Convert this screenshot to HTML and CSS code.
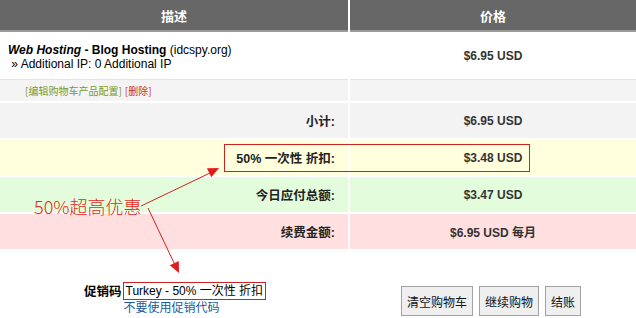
FILE: index.html
```html
<!DOCTYPE html>
<html lang="zh">
<head>
<meta charset="utf-8">
<link rel="stylesheet" href="styles.css">
</head>
<body>
<div class="page">
  <div class="row head">
    <div class="cell">描述</div>
    <div class="cell">价格</div>
  </div>
  <div class="row item">
    <div class="cell desc">
      <div><b><i>Web Hosting</i> - Blog Hosting</b> (idcspy.org)</div>
      <div class="addon">&nbsp;» Additional IP: 0 Additional IP</div>
    </div>
    <div class="cell price">$6.95 USD</div>
  </div>
  <div class="row links">
    <div class="cell"><a class="edit">[编辑购物车产品配置]</a> <a class="del">[删除]</a></div>
    <div class="cell"></div>
  </div>
  <div class="row sum sub">
    <div class="cell label">小计:</div>
    <div class="cell price">$6.95 USD</div>
  </div>
  <div class="row sum disc">
    <div class="cell label">50% 一次性 折扣:</div>
    <div class="cell price">$3.48 USD</div>
  </div>
  <div class="row sum total">
    <div class="cell label">今日应付总额:</div>
    <div class="cell price">$3.47 USD</div>
  </div>
  <div class="row sum recur">
    <div class="cell label">续费金额:</div>
    <div class="cell price">$6.95 USD 每月</div>
  </div>
  <div class="footer">
    <div class="promo">
      <span class="plabel">促销码</span>
      <span class="pcode">Turkey - 50% 一次性 折扣</span>
      <a class="premove">不要使用促销代码</a>
    </div>
    <div class="buttons">
      <button class="btn">清空购物车</button>
      <button class="btn">继续购物</button>
      <button class="btn">结账</button>
    </div>
  </div>

  <div class="hl"></div>
  <div class="note">50%超高优惠</div>
  <svg class="arrows" width="636" height="318" viewBox="0 0 636 318">
    <line x1="141" y1="206" x2="210" y2="173" stroke="#d42222" stroke-width="1"/>
    <polygon points="219,168 211.3,177.3 206.9,168.3" fill="#e01e1e"/>
    <line x1="148" y1="208" x2="175" y2="265" stroke="#d42222" stroke-width="1"/>
    <polygon points="179,273 178.8,260.9 169.8,265.2" fill="#e01e1e"/>
  </svg>
</div>
</body>
</html>
```

FILE: styles.css
```css
html, body {
  margin: 0;
  padding: 0;
  background: #ffffff;
}

body {
  font-family: "Liberation Sans", "Noto Sans CJK SC", sans-serif;
  font-size: 12px;
  color: #111;
}

.page {
  position: relative;
  width: 636px;
  height: 318px;
  overflow: hidden;
}

.row {
  display: grid;
  grid-template-columns: 348px 286px;
  column-gap: 2px;
}

.head .cell {
  height: 30px;
  background: #676767;
  border-bottom: 2px solid #9a9a9a;
  color: #fff;
  font-weight: bold;
  font-size: 13px;
  display: flex;
  align-items: center;
  justify-content: center;
  font-family: "Noto Sans CJK SC", sans-serif;
}

.item .cell {
  background: #fff;
  border-bottom: 1px solid #e4e4e4;
  box-sizing: border-box;
  height: 48px;
}

.desc {
  display: flex;
  flex-direction: column;
  justify-content: center;
  padding: 3px 0 0 8px;
  line-height: 14px;
  color: #000;
}

.price {
  display: flex;
  align-items: center;
  justify-content: center;
  font-weight: bold;
  color: #333;
}

.links .cell {
  height: 21px;
  background: #f4f4f4;
  display: flex;
  align-items: center;
  padding-left: 25px;
  font-size: 10px;
  font-family: "Noto Sans CJK SC", sans-serif;
}

.links .cell + .cell {
  padding-left: 0;
}

.edit {
  color: #7a9a2a;
  margin-right: 3px;
}

.del {
  color: #cc3333;
}

.sum {
  margin-top: 2px;
}

.sum .cell {
  height: 35px;
}

.label {
  display: flex;
  align-items: center;
  justify-content: flex-end;
  padding-right: 13px;
  font-weight: bold;
  font-size: 12.5px;
  color: #222;
}

.sub .cell { background: #f3f3f3; }
.disc .cell { background: #ffffdd; }
.total .cell { background: #e2fcdc; }
.recur .cell { background: #ffdfdf; }

.sum .price {
  font-size: 12px;
}

.footer {
  display: grid;
  grid-template-columns: 401px auto;
  padding-top: 32px;
}

.promo {
  justify-self: start;
  margin-left: 84px;
  display: grid;
  grid-template-columns: auto auto;
  align-items: center;
  font-size: 12px;
}

.plabel {
  font-weight: bold;
  font-size: 12.5px;
  color: #000;
}

.pcode {
  border: 1px solid #cc2222;
  padding: 0 2px;
  line-height: 16px;
  color: #000;
  margin-left: 1px;
}

.premove {
  grid-column: 2;
  color: #1a5a9c;
  padding-left: 2px;
  line-height: 16px;
}

.buttons {
  display: flex;
  gap: 6px;
  margin-top: 5px;
  align-items: flex-start;
}

.btn {
  height: 30px;
  padding: 0 5px;
  border: 1px solid #a3a3a3;
  background: #efefef;
  font-family: "Noto Sans CJK SC", sans-serif;
  font-size: 12px;
  color: #111;
  border-radius: 0;
}

.hl {
  position: absolute;
  left: 224px;
  top: 144px;
  width: 306px;
  height: 28px;
  box-sizing: border-box;
  border: 1px solid #cc2222;
}

.note {
  position: absolute;
  left: 34px;
  top: 195px;
  font-family: "Noto Sans CJK SC", sans-serif;
  font-weight: 300;
  font-size: 18px;
  line-height: 22px;
  color: #e02a20;
}

.arrows {
  position: absolute;
  left: 0;
  top: 0;
  pointer-events: none;
}
```
